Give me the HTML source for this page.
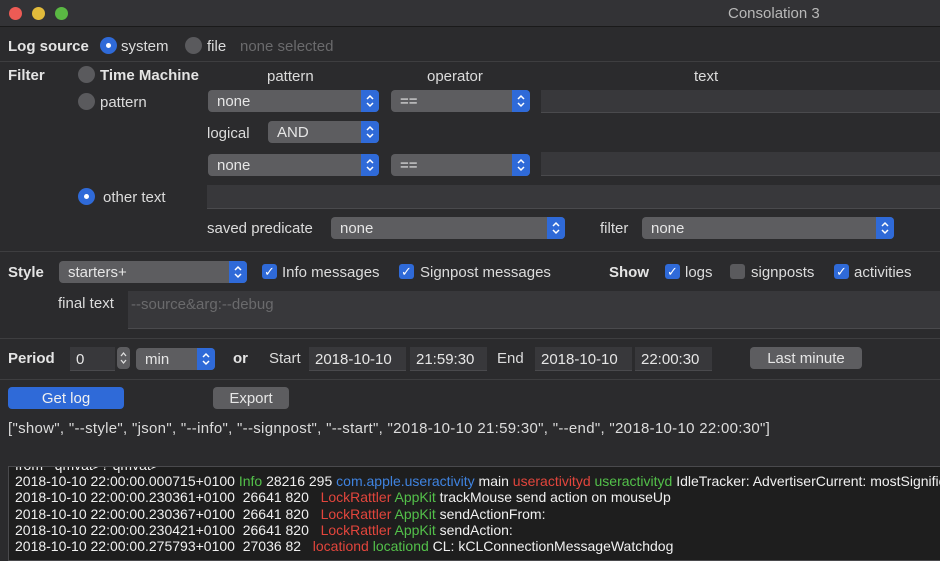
<!DOCTYPE html>
<html><head><meta charset="utf-8"><style>
*{margin:0;padding:0;box-sizing:border-box}
body{width:940px;height:555px;background:#2b2b2d;font-family:"Liberation Sans",sans-serif;font-size:15px;color:#dcdcdc;position:relative;overflow:hidden}
.a{position:absolute;white-space:nowrap}
.b{font-weight:bold;color:#e4e4e4}
.sep{position:absolute;left:0;width:940px;height:1px;background:#3e3e40}
.pop{position:absolute;height:22px;background:#5d5d60;border-radius:4px;color:#e6e6e6;padding-left:9px;line-height:24px}
.pop .st{position:absolute;right:0;top:0;width:18px;height:22px;background:#2f6ad8;border-radius:0 4px 4px 0}
.tf{position:absolute;background:#38383b;border-bottom:1px solid #4a4a4d;color:#e6e6e6;padding-left:6px}
.rad{position:absolute;width:17px;height:17px;border-radius:50%;background:#5a5a5d}
.rad.on{background:#2f6ad8}
.rad.on:after{content:"";position:absolute;left:6px;top:6px;width:5px;height:5px;border-radius:50%;background:#fff}
.cb{position:absolute;width:15px;height:15px;border-radius:3px;background:#2f6ad8;color:#fff;font-size:13px;line-height:15px;text-align:center}
.cb.off{background:#5a5a5d}
.btn{position:absolute;height:22px;border-radius:4px;background:#5d5d60;text-align:center;line-height:24px;color:#e6e6e6}
.log{position:absolute;left:8px;top:466px;width:940px;height:95px;background:#1e1e1e;border:1px solid #4a4a4d;font-size:14px;color:#f0f0f0;padding-left:6px;line-height:16.3px}
.r{color:#e2453c}.g{color:#53c04a}.bl{color:#3f83e0}
</style></head><body>
<svg width="0" height="0" style="position:absolute"><symbol id="ch" viewBox="0 0 18 22"><path d="M6 9l3-3 3 3M6 13l3 3 3-3" fill="none" stroke="#fff" stroke-width="1.5"/></symbol></svg>
<div class="a" style="left:0;top:0;width:940px;height:27px;background:#333336;border-bottom:1px solid #1a1a1a"></div>
<div class="a" style="left:9px;top:7px;width:13px;height:13px;border-radius:50%;background:#ed5b55"></div>
<div class="a" style="left:32px;top:7px;width:13px;height:13px;border-radius:50%;background:#e2bb3b"></div>
<div class="a" style="left:55px;top:7px;width:13px;height:13px;border-radius:50%;background:#5ab843"></div>
<div class="a" style="left:728px;top:5px;color:#b8b8b8">Consolation 3</div>

<div class="a b" style="left:8px;top:38px">Log source</div>
<div class="rad on" style="left:100px;top:37px"></div><div class="a" style="left:121px;top:38px">system</div>
<div class="rad" style="left:185px;top:37px"></div><div class="a" style="left:207px;top:38px">file</div>
<div class="a" style="left:240px;top:38px;color:#6a6a6c">none selected</div>
<div class="sep" style="top:61px"></div>

<div class="a b" style="left:8px;top:67px">Filter</div>
<div class="rad" style="left:78px;top:66px"></div><div class="a b" style="left:100px;top:67px">Time Machine</div>
<div class="a" style="left:267px;top:68px">pattern</div>
<div class="a" style="left:427px;top:68px">operator</div>
<div class="a" style="left:694px;top:68px">text</div>
<div class="rad" style="left:78px;top:93px"></div><div class="a" style="left:100px;top:94px">pattern</div>
<div class="pop" style="left:208px;top:90px;width:171px">none<svg class="st" viewBox="0 0 18 22"><use href="#ch"/></svg></div>
<div class="pop" style="left:391px;top:90px;width:139px">==<svg class="st" viewBox="0 0 18 22"><use href="#ch"/></svg></div>
<div class="tf" style="left:541px;top:90px;width:400px;height:23px"></div>
<div class="a" style="left:207px;top:125px">logical</div>
<div class="pop" style="left:268px;top:121px;width:111px">AND<svg class="st" viewBox="0 0 18 22"><use href="#ch"/></svg></div>
<div class="pop" style="left:208px;top:154px;width:171px">none<svg class="st" viewBox="0 0 18 22"><use href="#ch"/></svg></div>
<div class="pop" style="left:391px;top:154px;width:139px">==<svg class="st" viewBox="0 0 18 22"><use href="#ch"/></svg></div>
<div class="tf" style="left:541px;top:152px;width:400px;height:24px"></div>
<div class="rad on" style="left:78px;top:188px"></div><div class="a" style="left:103px;top:189px">other text</div>
<div class="tf" style="left:207px;top:185px;width:740px;height:24px"></div>
<div class="a" style="left:207px;top:220px">saved predicate</div>
<div class="pop" style="left:331px;top:217px;width:234px">none<svg class="st" viewBox="0 0 18 22"><use href="#ch"/></svg></div>
<div class="a" style="left:600px;top:220px">filter</div>
<div class="pop" style="left:642px;top:217px;width:252px">none<svg class="st" viewBox="0 0 18 22"><use href="#ch"/></svg></div>
<div class="sep" style="top:251px"></div>

<div class="a b" style="left:8px;top:264px">Style</div>
<div class="pop" style="left:59px;top:261px;width:188px">starters+<svg class="st" viewBox="0 0 18 22"><use href="#ch"/></svg></div>
<div class="cb" style="left:262px;top:264px">✓</div><div class="a" style="left:282px;top:264px">Info messages</div>
<div class="cb" style="left:399px;top:264px">✓</div><div class="a" style="left:420px;top:264px">Signpost messages</div>
<div class="a b" style="left:609px;top:264px">Show</div>
<div class="cb" style="left:665px;top:264px">✓</div><div class="a" style="left:685px;top:264px">logs</div>
<div class="cb off" style="left:730px;top:264px"></div><div class="a" style="left:751px;top:264px">signposts</div>
<div class="cb" style="left:834px;top:264px">✓</div><div class="a" style="left:854px;top:264px">activities</div>
<div class="a" style="left:58px;top:295px">final text</div>
<div class="tf" style="left:128px;top:291px;width:820px;height:38px;padding:5px 0 0 3px;color:#6a6a6c">--source&amp;arg:--debug</div>
<div class="sep" style="top:338px"></div>

<div class="a b" style="left:8px;top:350px">Period</div>
<div class="tf" style="left:70px;top:347px;width:45px;height:24px;padding-top:4px">0</div>
<svg class="a" style="left:117px;top:347px" width="13" height="22" viewBox="0 0 13 22"><rect width="13" height="22" rx="4" fill="#5d5d60"/><path d="M4 9l2.5-3 2.5 3M4 13l2.5 3 2.5-3" fill="none" stroke="#ddd" stroke-width="1.3"/></svg>
<div class="pop" style="left:136px;top:348px;width:79px">min<svg class="st" viewBox="0 0 18 22"><use href="#ch"/></svg></div>
<div class="a b" style="left:233px;top:350px">or</div>
<div class="a" style="left:269px;top:350px">Start</div>
<div class="tf" style="left:309px;top:347px;width:97px;height:24px;padding-top:4px">2018-10-10</div>
<div class="tf" style="left:410px;top:347px;width:77px;height:24px;padding-top:4px">21:59:30</div>
<div class="a" style="left:497px;top:350px">End</div>
<div class="tf" style="left:535px;top:347px;width:97px;height:24px;padding-top:4px">2018-10-10</div>
<div class="tf" style="left:635px;top:347px;width:77px;height:24px;padding-top:4px">22:00:30</div>
<div class="btn" style="left:750px;top:347px;width:112px">Last minute</div>
<div class="sep" style="top:379px"></div>

<div class="btn" style="left:8px;top:387px;width:116px;background:#2f6ad8;color:#f0f0f0">Get log</div>
<div class="btn" style="left:213px;top:387px;width:76px">Export</div>
<div class="a" style="left:8px;top:420px;letter-spacing:0.3px">["show", "--style", "json", "--info", "--signpost", "--start", "2018-10-10 21:59:30", "--end", "2018-10-10 22:00:30"]</div>

<div class="log" style="white-space:nowrap;padding-top:0">
<div style="height:6px;overflow:hidden;position:relative"><div style="position:absolute;top:-10px">from &nbsp;&nbsp;qmvat&gt;? qmvat&gt;</div></div>
<div>2018-10-10 22:00:00.000715+0100 <span class="g">Info</span> 28216 295 <span class="bl">com.apple.useractivity</span> main <span class="r">useractivityd</span> <span class="g">useractivityd</span> IdleTracker: AdvertiserCurrent: mostSignificant</div>
<div>2018-10-10 22:00:00.230361+0100 &nbsp;26641 820 &nbsp; <span class="r">LockRattler</span> <span class="g">AppKit</span> trackMouse send action on mouseUp</div>
<div>2018-10-10 22:00:00.230367+0100 &nbsp;26641 820 &nbsp; <span class="r">LockRattler</span> <span class="g">AppKit</span> sendActionFrom:</div>
<div>2018-10-10 22:00:00.230421+0100 &nbsp;26641 820 &nbsp; <span class="r">LockRattler</span> <span class="g">AppKit</span> sendAction:</div>
<div>2018-10-10 22:00:00.275793+0100 &nbsp;27036 82 &nbsp; <span class="r">locationd</span> <span class="g">locationd</span> CL: kCLConnectionMessageWatchdog</div>
</div>
</body></html>
